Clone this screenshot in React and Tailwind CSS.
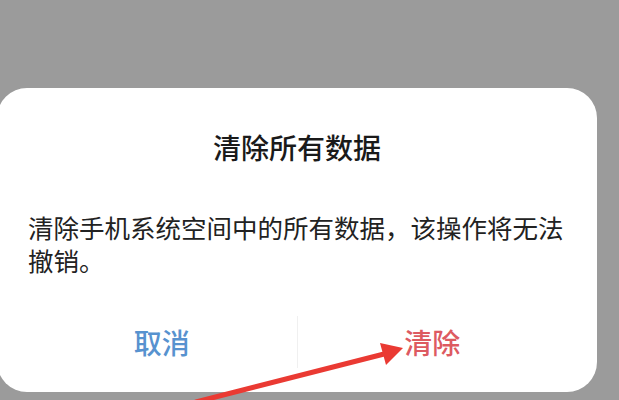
import React from 'react';

const Arrow = () => (
  <svg className="absolute left-0 top-0 pointer-events-none" width="619" height="400" viewBox="0 0 619 400">
    <line x1="196" y1="402" x2="388" y2="353" stroke="#ea3a33" strokeWidth="5" strokeLinecap="round" />
    <polygon points="403,348 380,343 386,365" fill="#ea3a33" />
  </svg>
);

export default function App() {
  return (
    <div
      className="relative w-[619px] h-[400px] overflow-hidden bg-[#9b9b9b] pt-[88px]"
      style={{ fontFamily: '"Noto Sans CJK SC", "Noto Sans", sans-serif' }}
    >
      <div className="ml-[-3px] w-[600px] h-[304px] rounded-[30px] bg-white flex flex-col">
        <h1 className="pt-[42px] text-center text-[28px] leading-[34px] font-medium text-[#1a1a1a]">
          清除所有数据
        </h1>
        <p className="mt-[46px] pl-[31px] w-[580px] text-[25.5px] leading-[33px] text-[#222222]">
          清除手机系统空间中的所有数据，该操作将无法撤销。
        </p>
        <div className="mt-[36px] px-[30px] flex items-center h-[60px]">
          <button className="flex-1 text-center text-[28px] leading-[34px] font-medium text-[#5792cf]">取消</button>
          <div className="w-px h-[52px] bg-[#f0f0f0]" />
          <button className="flex-1 text-center text-[28px] leading-[34px] font-medium text-[#dd5a61]">清除</button>
        </div>
      </div>
      <Arrow />
    </div>
  );
}
